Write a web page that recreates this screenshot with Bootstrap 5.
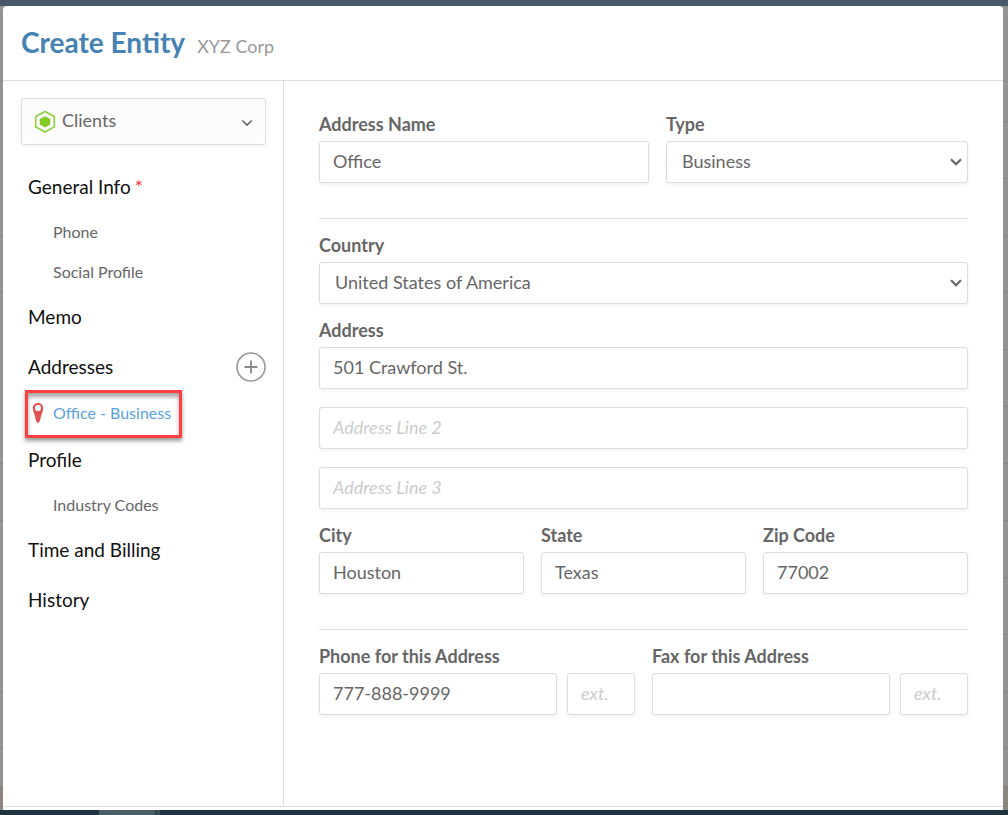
<!DOCTYPE html>
<html lang="en">
<head>
<meta charset="utf-8">
<meta name="viewport" content="width=device-width, initial-scale=1">
<title>Create Entity</title>
<link href="https://cdn.jsdelivr.net/npm/bootstrap@5.3.0/dist/css/bootstrap.min.css" rel="stylesheet">
<style>
  body { font-family: Lato, sans-serif; font-size: 18px; line-height: 24px; color: #666; background: #949494; }
  .top-strip { height: 6px; background: #4a5968; }
  .bottom-strip { height: 5px; background: #1f3440; }
  .bottom-strip span { width: 57px; height: 5px; margin-left: 99px; background: #4b5d66; border-right: 1px solid #2b3d46; box-shadow: 4px 0 #3a4c56; }
  .backdrop {
    background:
      linear-gradient(#949494 0 75px, #868686 75px 76px) 0 0 / 100% 76px no-repeat,
      linear-gradient(#8a8580, #8a8580) 0 100% / 100% 25px no-repeat,
      repeating-linear-gradient(#949494 0 56px, #868686 56px 57px) 0 2px; }
  .panel { margin: 0 5px 0 3px; background: #fff; border-radius: 4px 4px 0 0; }
  .panel-head { height: 75px; padding: 18px 18px 0; border-bottom: 1px solid #ddd; }
  .panel-head h1 { font-size: 28px; line-height: 36px; font-weight: 700; color: #4682b4; }
  .panel-head .entity { color: #999; }
  .panel-foot { height: 4px; border-top: 1px solid #ddd; box-sizing: border-box; }
  .sidebar { width: 281px; flex: none; border-right: 1px solid #ddd; padding: 17px 17px 0 18px; }
  .kind-btn { height: 47px; padding: 0 12px; border: 1px solid #ddd; border-radius: 3px; background: #fcfcfc; color: #666;
    font-size: 18px; box-shadow: 0 2px 4px rgba(0,0,0,.06), inset 0 0 12px #fff; }
  .kind-name { padding: 0 0 3px 6px; }
  .side-nav { margin-top: 17px; }
  .side-nav a { color: #111; text-decoration: none; padding-left: 7px; }
  .main-item { height: 50px; font-size: 19px; }
  .sub-item { height: 40px; font-size: 16px; }
  .side-nav .sub-item a { color: #666; padding-left: 32px; }
  .side-nav .sub-item.current { height: 43px; padding-bottom: 2px; position: relative; }
  .side-nav .sub-item.current a { color: #5aa0e0; }
  .current::before { content: ""; position: absolute; left: 4px; top: -2px; width: 157px; height: 48px; border: 3px solid #ff4040;
    box-shadow: 0 3px 4px rgba(0,0,0,.4), inset 0 4px 4px rgba(0,0,0,.35); pointer-events: none; }
  .pin { position: absolute; left: 11px; top: 10px; }
  .req { color: #f33; margin-left: 4px; }
  .form-area { padding: 35px; min-width: 0; }
  .form-area .form-label { display: block; font-weight: 700; line-height: 16px; margin-bottom: 9px; white-space: nowrap; }
  .form-area .form-control, .form-area .form-select { height: 42px; padding: 0 13px 2px; font-size: 18px; color: #666; border: 1px solid #ddd;
    border-radius: 3px; background-color: #fff; box-shadow: 0 2px 4px rgba(0,0,0,.06); }
  .form-area .form-select { padding-left: 15px;
    background-image: url("data:image/svg+xml,%3Csvg xmlns='http://www.w3.org/2000/svg' viewBox='0 0 12 8'%3E%3Cpath d='M1 1.3l5 5 5-5' fill='none' stroke='%23666' stroke-width='2.2'/%3E%3C/svg%3E");
    background-size: 12px 8px; background-position: right 5px center; }
  .form-area .form-control::placeholder { color: #ccc; font-style: italic; }
  .field { margin-bottom: 18px; }
  .gap-cols { gap: 17px; }
  .gap-ext { gap: 10px; }
  .rule { border-top: 1px solid #ddd; margin: 17px 0 18px; }
  .name-col { flex: 330 1 0; }
  .type-col { flex: 302 1 0; }
  .ext-box { flex: 0 0 68px; }
</style>
</head>
<body class="min-vh-100 d-flex flex-column">
  <div class="top-strip"></div>
  <div class="backdrop flex-grow-1 d-flex flex-column">
    <main class="panel flex-grow-1 d-flex flex-column">
      <header class="panel-head d-flex align-items-baseline">
        <h1 class="mb-0">Create Entity</h1>
        <span class="entity ms-2 ps-1">XYZ Corp</span>
      </header>
      <div class="d-flex flex-grow-1">
        <aside class="sidebar">
          <button type="button" class="kind-btn w-100 d-flex align-items-center">
            <svg width="22" height="24" viewBox="0 0 22 24" aria-hidden="true"><path d="M11 1.500l9.300 5v10.400L11 22l-9.300-5.100V6.500z" fill="#fff" stroke="#8bd136" stroke-width="1.600"/><path d="M11 6.300l5.300 2.700v5.600L11 17.400l-5.300-2.800V9z" fill="#84cc28"/></svg>
            <span class="kind-name me-auto">Clients</span>
            <svg width="12" height="10" viewBox="0 0 12 10" aria-hidden="true"><path d="M1.300 3.500L6 8l4.700-4.500" fill="none" stroke="#666" stroke-width="1.700"/></svg>
          </button>
          <nav class="side-nav" aria-label="Entity sections">
            <div class="main-item d-flex align-items-center"><a href="#">General Info<span class="req">*</span></a></div>
            <div class="sub-item d-flex align-items-center"><a href="#">Phone</a></div>
            <div class="sub-item d-flex align-items-center"><a href="#">Social Profile</a></div>
            <div class="main-item d-flex align-items-center"><a href="#">Memo</a></div>
            <div class="main-item d-flex align-items-center justify-content-between"><a href="#">Addresses</a>
              <button type="button" class="btn p-0 border-0 d-flex" aria-label="Add address"><svg width="30" height="30" viewBox="0 0 30 30"><circle cx="15" cy="15" r="14" fill="none" stroke="#999" stroke-width="1.600"/><path d="M15 8.500v13M8.500 15h13" stroke="#888" stroke-width="1.800"/></svg></button>
            </div>
            <div class="sub-item current d-flex align-items-center">
              <svg class="pin" width="12" height="22" viewBox="0 0 12 22" aria-hidden="true"><path fill-rule="evenodd" fill="#e05252" d="M6 1C2.900 1 .8 3.200.8 6c0 2.600 1.300 5 2.200 8.500C3.700 17.500 4.600 21 6 21s2.300-3.500 3-6.500C9.900 11 11.200 8.600 11.200 6 11.200 3.200 9.100 1 6 1zm0 1.900a3.100 3.100 0 1 1 0 6.200 3.100 3.100 0 0 1 0-6.200z"/></svg>
              <a href="#" aria-current="page">Office - Business</a></div>
            <div class="main-item d-flex align-items-center"><a href="#">Profile</a></div>
            <div class="sub-item d-flex align-items-center"><a href="#">Industry Codes</a></div>
            <div class="main-item d-flex align-items-center"><a href="#">Time and Billing</a></div>
            <div class="main-item d-flex align-items-center"><a href="#">History</a></div>
          </nav>
        </aside>
        <form class="form-area flex-grow-1">
          <div class="d-flex gap-cols">
            <div class="field name-col"><label class="form-label" for="addrName">Address Name</label><input id="addrName" class="form-control" value="Office"></div>
            <div class="field type-col"><label class="form-label" for="addrType">Type</label><select id="addrType" class="form-select"><option>Business</option></select></div>
          </div>
          <div class="rule"></div>
          <div class="field"><label class="form-label" for="country">Country</label><select id="country" class="form-select"><option>United States of America</option></select></div>
          <div class="field"><label class="form-label" for="line1">Address</label><input id="line1" class="form-control" value="501 Crawford St."></div>
          <div class="field"><input class="form-control" placeholder="Address Line 2" aria-label="Address Line 2"></div>
          <div class="field"><input class="form-control" placeholder="Address Line 3" aria-label="Address Line 3"></div>
          <div class="d-flex gap-cols">
            <div class="field w-100"><label class="form-label" for="city">City</label><input id="city" class="form-control" value="Houston"></div>
            <div class="field w-100"><label class="form-label" for="state">State</label><input id="state" class="form-control" value="Texas"></div>
            <div class="field w-100"><label class="form-label" for="zip">Zip Code</label><input id="zip" class="form-control" value="77002"></div>
          </div>
          <div class="rule"></div>
          <div class="d-flex gap-cols">
            <div class="w-100"><label class="form-label" for="phone">Phone for this Address</label>
              <div class="d-flex gap-ext"><input id="phone" type="tel" class="form-control" value="777-888-9999"><input class="form-control ext-box" placeholder="ext." aria-label="Phone extension"></div></div>
            <div class="w-100"><label class="form-label" for="fax">Fax for this Address</label>
              <div class="d-flex gap-ext"><input id="fax" type="tel" class="form-control"><input class="form-control ext-box" placeholder="ext." aria-label="Fax extension"></div></div>
          </div>
        </form>
      </div>
      <div class="panel-foot"></div>
    </main>
  </div>
  <div class="bottom-strip d-flex"><span></span></div>
  <script src="https://cdn.jsdelivr.net/npm/bootstrap@5.3.0/dist/js/bootstrap.bundle.min.js"></script>
</body>
</html>
